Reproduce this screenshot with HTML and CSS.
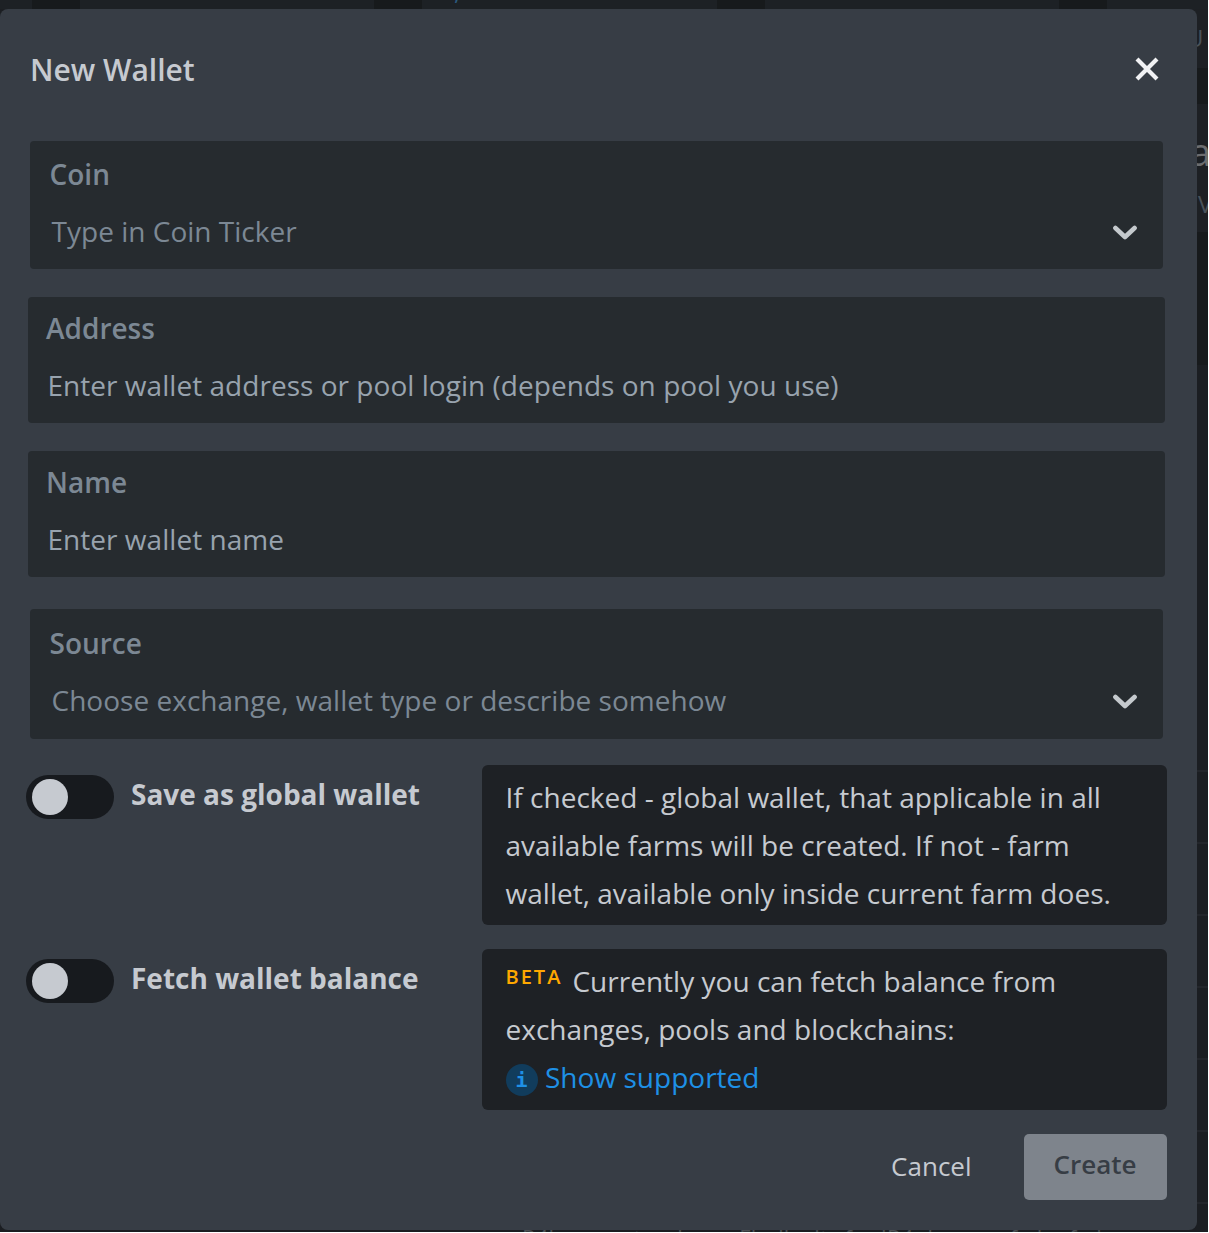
FILE: index.html
```html
<!DOCTYPE html>
<html lang="en">
<head>
<meta charset="utf-8">
<title>New Wallet</title>
<link rel="stylesheet" href="styles.css">
</head>
<body>
<div class="page">
  <div class="backdrop" aria-hidden="true">
    <div class="strip"><i></i><i></i><i></i><i></i></div>
    <div class="side">
      <div class="side-tab">U</div>
      <div class="side-card"><b>a</b><span>V</span></div>
      <div class="side-list"><i></i><i></i><i></i><i></i><i></i><i></i><i></i></div>
    </div>
    <span class="comma">,</span>
    <div class="footer-line">R4l was not wal now Flndh sits for IR4 desc ow f ube f ub</div>
  </div>
  <main class="modal">
    <header class="head">
      <h1>New Wallet</h1>
      <svg class="close" viewBox="0 0 24 24"><path d="M2 2 22 22M22 2 2 22"/></svg>
    </header>
    <section class="field select coin">
      <label>Coin</label>
      <p>Type in Coin Ticker</p>
      <svg class="chevron" viewBox="0 0 26 16"><path d="M3.4 3 13 12 22.6 3"/></svg>
    </section>
    <section class="field address">
      <label>Address</label>
      <p>Enter wallet address or pool login (depends on pool you use)</p>
    </section>
    <section class="field name">
      <label>Name</label>
      <p>Enter wallet name</p>
    </section>
    <section class="field select source">
      <label>Source</label>
      <p>Choose exchange, wallet type or describe somehow</p>
      <svg class="chevron" viewBox="0 0 26 16"><path d="M3.4 3 13 12 22.6 3"/></svg>
    </section>
    <section class="option">
      <span class="toggle"></span>
      <strong class="save">Save as global wallet</strong>
      <div class="hint">If checked - global wallet, that applicable in all<br>available farms will be created. If not - farm<br>wallet, available only inside current farm does.</div>
    </section>
    <section class="option">
      <span class="toggle"></span>
      <strong class="fetch">Fetch wallet balance</strong>
      <div class="hint tall"><span class="beta">BETA</span><span class="intro">Currently you can fetch balance from</span><br>exchanges, pools and blockchains:<br><a class="link"><span class="info">i</span><span>Show supported</span></a></div>
    </section>
    <footer class="actions">
      <span class="cancel">Cancel</span>
      <span class="create">Create</span>
    </footer>
  </main>
</div>
</body>
</html>
```
FILE: styles.css
```css
* { box-sizing: border-box; }
body { margin: 0; background: #fff; font-family: "Open Sans", "Noto Sans", sans-serif; font-size: 28px; color: #c6cad0; }
.page { position: relative; width: 1208px; height: 1232px; padding-top: 9px; background: #1b1e22; overflow: hidden; }
.backdrop { position: absolute; inset: 0; overflow: hidden; }
.strip { display: flex; gap: 294.4px; height: 9px; padding-left: 32px; background: #1d2125; }
.strip i { flex: none; width: 48px; height: 9px; background: #171a1c; }
.side { position: absolute; left: 1190px; top: 9px; width: 18px; background: #171a1c; }
.side-tab { height: 59px; background: #1d2024; color: #49525a; font-size: 24px; line-height: 58px; text-indent: -4px; }
.side-card { margin-top: 36px; height: 128px; background: #1d2024; color: #6b6d70; }
.side-card b { display: block; height: 78px; font-size: 38px; line-height: 94px; font-weight: 400; }
.side-card span { display: block; font-size: 24px; line-height: 43px; padding-left: 8px; color: #49525a; }
.side-list { margin-top: 133px; height: 867px; padding-top: 405px; background: #1b1e22; }
.side-list i { display: block; height: 72px; border-top: 2px solid #23262b; }
.comma { position: absolute; left: 454px; top: -25px; color: #2b5b80; font-size: 24px; line-height: 32px; }
.footer-line { position: absolute; left: 522px; top: 1225px; color: #4b4f53; font-size: 22px; line-height: 24px; letter-spacing: .2px; white-space: nowrap; }
.modal { position: relative; width: 1197px; height: 1221px; padding: 0 30px 0 26px; background: #373d45; border-radius: 8px; }
.head { display: flex; justify-content: space-between; align-items: center; height: 132px; padding: 0 8px 12px 4px; }
h1 { margin: 2px 0 0; font-size: 30px; font-weight: 600; line-height: 40px; }
.close { width: 24px; height: 24px; fill: none; stroke: #f1f2f4; stroke-width: 4.2; }
.field { display: grid; grid-template-columns: 1fr auto; grid-template-rows: 57px 57px; align-items: center; width: 1137px; height: 126px; margin: 0 0 28px 2px; padding: 2px 26px 0 18px; background: #262b2f; border-radius: 4px; color: #7c8894; }
.field label { grid-column: 1 / 3; padding-top: 1px; font-weight: 600; line-height: 40px; }
.field p { margin: 0; padding-left: 1.5px; line-height: 40px; letter-spacing: .035px; color: #98a3ae; white-space: nowrap; }
.select { width: 1133px; height: 128px; margin-left: 4px; padding: 4px 25px 0 19.5px; }
.field.select p { padding-left: 2px; letter-spacing: .02px; color: #7c8894; }
.name { margin-bottom: 32px; }
.source { height: 130px; padding-top: 5px; margin-bottom: 26px; }
.chevron { width: 26px; height: 16px; margin-top: 4px; fill: none; stroke: #c4c9cd; stroke-width: 4.6; stroke-linecap: round; stroke-linejoin: round; }
.option { display: flex; align-items: flex-start; margin-bottom: 24px; }
.toggle { width: 88px; height: 44px; margin-top: 10px; padding: 4px 6px; border-radius: 22px; background: #171a1e; }
.toggle::before { content: ""; display: block; width: 36px; height: 36px; border-radius: 50%; background: #c6cad0; }
.option strong { width: 351px; margin: 9px 0 0 17px; font-weight: 700; line-height: 40px; white-space: nowrap; }
.hint { width: 685px; height: 160px; padding: 8px 24px 0 23.5px; border-radius: 6px; background: #1e2125; line-height: 48px; letter-spacing: .02px; white-space: nowrap; }
.tall { height: 161px; }
.beta { display: inline-block; height: 48px; margin-right: 10px; font-size: 20px; font-weight: 600; line-height: 40px; letter-spacing: 2px; color: #ffa800; vertical-align: top; }
.link { display: flex; align-items: center; height: 48px; gap: 7.5px; color: #1e90e6; }
.info { width: 32px; height: 32px; margin-top: 6px; border-radius: 50%; background: #113c5c; font: 700 20px/33px "DejaVu Sans Mono", monospace; text-align: center; }
.actions { display: flex; justify-content: flex-end; gap: 52.5px; font-size: 26px; line-height: 64px; }
.create { width: 143px; height: 66px; padding-right: 1px; border-radius: 5px; background: #7e848c; color: #373d45; font-weight: 600; line-height: 61px; text-align: center; }
```
